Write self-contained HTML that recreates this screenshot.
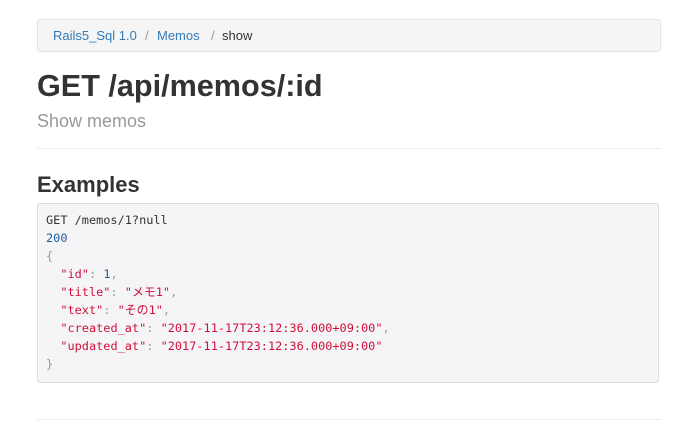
<!DOCTYPE html>
<html><head><meta charset="utf-8"><style>
body{margin:0;background:#fff;font-family:"Liberation Sans","Noto Sans CJK JP",sans-serif;color:#333;width:677px;height:435px;overflow:hidden;position:relative}
.bc{position:absolute;left:37px;top:19px;width:622px;height:31px;background:#f5f5f5;border:1px solid #e3e3e3;border-radius:3px;font-size:13px;line-height:31px;box-sizing:content-box}
.bc span{position:absolute;top:0}
a{color:#337ab7}
.sep{color:#999}
h1{position:absolute;left:37px;top:66px;margin:0;font-size:30.6px;font-weight:bold;line-height:40px;color:#333}
.sub{position:absolute;left:37px;top:109px;font-size:18px;color:#999;line-height:24px}
.hr{position:absolute;left:37px;width:624px;height:1px;background:#eee}
h2{position:absolute;left:37px;top:170px;margin:0;font-size:22px;font-weight:bold;line-height:30px}
pre{position:absolute;left:37px;top:203px;width:622px;height:180px;margin:0;box-sizing:border-box;background:#f5f5f7;border:1px solid #ddd;border-radius:3px;padding:7px 8px;font-family:"DejaVu Sans Mono","Liberation Mono","Noto Sans CJK JP",monospace;font-size:11.9px;line-height:18px;color:#333}
.n{color:#1f5b99}.s{color:#d0103a}.p{color:#999}
</style></head><body>
<div class="bc"><span style="left:15px"><a>Rails5_Sql 1.0</a></span><span class="sep" style="left:107px">/</span><span style="left:119px"><a>Memos</a></span><span class="sep" style="left:173px">/</span><span style="left:184px">show</span></div>
<h1>GET /api/memos/:id</h1>
<div class="sub">Show memos</div>
<div class="hr" style="top:148px"></div>
<h2>Examples</h2>
<pre>GET /memos/1?null
<span class="n">200</span>
<span class="p">{</span>
  <span class="s">"id"</span><span class="p">:</span> <span class="n">1</span><span class="p">,</span>
  <span class="s">"title"</span><span class="p">:</span> <span class="s">"メモ1"</span><span class="p">,</span>
  <span class="s">"text"</span><span class="p">:</span> <span class="s">"その1"</span><span class="p">,</span>
  <span class="s">"created_at"</span><span class="p">:</span> <span class="s">"2017-11-17T23:12:36.000+09:00"</span><span class="p">,</span>
  <span class="s">"updated_at"</span><span class="p">:</span> <span class="s">"2017-11-17T23:12:36.000+09:00"</span>
<span class="p">}</span></pre>
<div class="hr" style="top:419px"></div>
</body></html>
